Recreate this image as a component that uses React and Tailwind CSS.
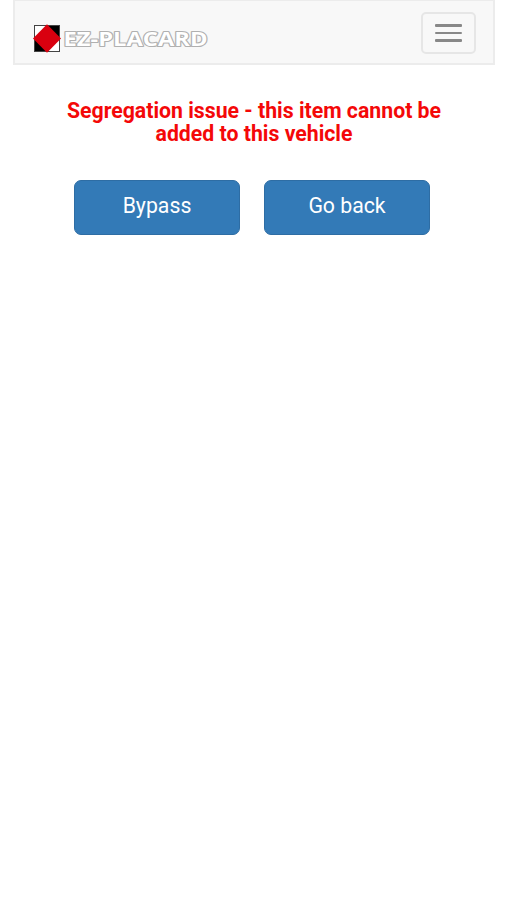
const Logo = () => (
  <svg width="180" height="34" viewBox="0 0 180 34" aria-label="EZ-PLACARD">
    <rect x="1.5" y="3.5" width="25" height="26" fill="#fff" />
    <path d="M14 3.500h12.500V16.500H14zM1.500 16.500H14v13H1.500z" fill="#000" />
    <rect x="1.5" y="3.5" width="25" height="26" fill="none" stroke="#444" />
    <path d="M14 2.200L28 16.500 14 30.800 0 16.500z" fill="#d9000f" />
    <text
      x="30.500"
      y="24"
      textLength="144"
      lengthAdjust="spacingAndGlyphs"
      fill="#fff"
      stroke="#b0b0b0"
      strokeWidth="2.2"
      strokeLinejoin="round"
      paintOrder="stroke"
      className="font-['Open_Sans',sans-serif] text-[20px] font-bold"
    >
      EZ-PLACARD
    </text>
  </svg>
);

const Navbar = () => (
  <nav className="mr-3 ml-[13px] flex h-[65px] items-start justify-between border-2 border-t-1 border-[#ececec] bg-[#f8f8f8] pr-[17px] pl-[18px]">
    <a href="#" className="mt-[21px]">
      <Logo />
    </a>
    <button
      aria-label="Toggle navigation"
      className="mt-[11px] flex h-[42px] w-[55px] flex-col items-center justify-center gap-[5px] rounded-[5px] border-2 border-[#e6e6e6]"
    >
      <span className="h-[2.500px] w-[27px] rounded-[1px] bg-[#888]" />
      <span className="h-[2.500px] w-[27px] rounded-[1px] bg-[#888]" />
      <span className="h-[2.500px] w-[27px] rounded-[1px] bg-[#888]" />
    </button>
  </nav>
);

const ActionButton = ({ children }) => (
  <button className="h-[55px] w-[166px] rounded-[7px] border border-[#2e6da4] bg-[#337ab7] pb-[3px] text-[21.250px] text-white">
    {children}
  </button>
);

export default function App() {
  return (
    <div className="min-h-screen bg-white font-[Roboto,sans-serif]">
      <Navbar />
      <main>
        <h1 className="mt-[35px] pr-[54px] pl-[55px] text-center text-[21.250px] leading-[22.500px] font-bold text-[#f40808]">
          Segregation issue - this item cannot be added to this vehicle
        </h1>
        <div className="mt-[35px] ml-[74px] flex gap-6">
          <ActionButton>Bypass</ActionButton>
          <ActionButton>Go back</ActionButton>
        </div>
      </main>
    </div>
  );
}
